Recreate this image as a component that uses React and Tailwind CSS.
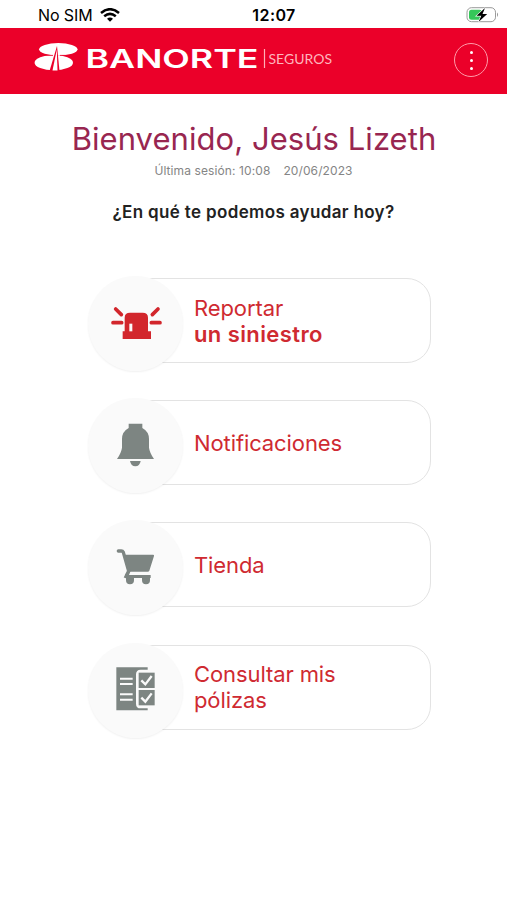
import React from 'react';

const SirenIcon = () => (
  <svg className="h-[95px] w-[95px]" viewBox="24 33 285 285" fill="#d2262c">
    <path d="M134 202V158q0-15 16-15h38q16 0 16 15v41h9v23H128v-23h6z" />
    <rect x="148" y="176" width="9" height="23" fill="#fafafa" />
    <path d="M107 132l17 17M234 132l-17 17M99 173h26M214 173h26" fill="none" stroke="#d2262c" strokeWidth="11" strokeLinecap="round" />
  </svg>
);

const BellIcon = () => (
  <svg className="h-[95px] w-[95px]" viewBox="24 25 285 285" fill="#7d8582">
    <path d="M146 102h41v13q20 11 20 33v26q2 15 15 34H111q13-19 15-34v-26q0-22 20-33z" />
    <path d="M150 214h32q-3 16-16 16t-16-16z" />
  </svg>
);

const CartIcon = () => (
  <svg className="h-[95px] w-[95px]" viewBox="24 31 285 285" fill="#7d8582">
    <path d="M131 135h88q4 0 3 4l-14 44q-1 3-5 3h-52l-4 10h65v9H137q-5-2-3-8l8-16z" />
    <path d="M115 124h9q4 0 6 4l16 56" fill="none" stroke="#7d8582" strokeWidth="10" strokeLinecap="round" />
    <path d="M133 203l8-12v14z" stroke="#7d8582" strokeWidth="3" />
    <path d="M138 203h24v9a12 12 0 0 1-24 0zM186 203h24v9a12 12 0 0 1-24 0z" />
  </svg>
);

const PolicyIcon = () => (
  <svg className="h-[95px] w-[95px]" viewBox="24 26 285 285" fill="#7d8582">
    <path d="M109 99h94v7h-21q-14 0-14 14v88q0 14 14 14h21v6h-94z" />
    <path d="M120 133h38M120 149h38M120 180h38M120 196h38" stroke="#fafafa" strokeWidth="6" />
    <rect x="176" y="115" width="48" height="46" />
    <rect x="176" y="167" width="48" height="46" />
    <path d="M184 138l12 12 19-25M184 190l12 12 19-25" fill="none" stroke="#fafafa" strokeWidth="7" />
  </svg>
);

const menuItems = [
  { icon: SirenIcon, title: 'Reportar', strong: 'un siniestro' },
  { icon: BellIcon, title: 'Notificaciones' },
  { icon: CartIcon, title: 'Tienda' },
  { icon: PolicyIcon, title: 'Consultar mis pólizas' },
];

function StatusBar() {
  return (
    <div className="grid h-7 grid-cols-3 items-center pt-0.5 pr-[7px] pl-[38px] text-black">
      <div className="flex items-center gap-[7px]">
        <span className="text-[16px] leading-none tracking-[-0.1px] whitespace-nowrap">No SIM</span>
        <svg className="h-[14px] w-5" viewBox="0 0 20 14" fill="none" stroke="#000" strokeWidth="2.5">
          <path d="M1 5Q10-2.6 19 5M4.2 8.3q5.8-4.8 11.6 0" />
          <path d="M7 10.7q3-2.3 6 0L10 13.8z" fill="#000" stroke="none" />
        </svg>
      </div>
      <span className="ml-[10px] text-center text-[16px] leading-none font-semibold tracking-[0.4px]">12:07</span>
      <svg className="h-[18px] w-[34px] justify-self-end" viewBox="0 0 34 18">
        <rect x="1" y="1.7" width="28.5" height="14" rx="4.5" fill="#fff" stroke="#9a9a9a" />
        <path d="M31 6.5q2.2 2.2 0 4.5z" fill="#9a9a9a" />
        <rect x="3" y="3.7" width="13" height="10" rx="2.5" fill="#35c759" />
        <path d="M19 2L10.5 9.8h4.8L12.5 16l8.7-8h-4.7z" fill="#000" stroke="#fff" strokeWidth="1.2" paintOrder="stroke" />
      </svg>
    </div>
  );
}

function Header() {
  return (
    <header className="flex h-[66px] items-start justify-between bg-[#eb0029] pr-[19px] pl-[34px]">
      <svg className="mt-[14px] h-[32px] w-[300px]" viewBox="0 0 300 32" fill="#fff">
        <ellipse cx="24.3" cy="7.3" rx="19.2" ry="6.2" />
        <ellipse cx="19.8" cy="20.7" rx="19.2" ry="7.6" />
        <path d="M1 13.4h18M26 13.4h16" stroke="#eb0029" strokeWidth="0.8" />
        <path d="M23 4L15.5 29H25.5z" fill="#eb0029" />
        <path d="M22.8 7.5L18.5 28.5h5z" />
        <text x="51.5" y="26" fontFamily="Inter, sans-serif" fontSize="25" fontWeight="600" textLength="173" lengthAdjust="spacingAndGlyphs">
          BANORTE
        </text>
        <path d="M230.5 7v19" stroke="#ffb0b8" strokeWidth="1.2" />
        <text x="234.5" y="21.5" fill="#ffb5bd" fontFamily="Lato, sans-serif" fontSize="14" textLength="63.5" lengthAdjust="spacingAndGlyphs">
          SEGUROS
        </text>
      </svg>
      <button className="mt-[15px] flex h-[34px] w-[34px] flex-col items-center justify-center gap-[5px] rounded-full border border-[#ff9aa8]">
        <span className="h-[3px] w-[3px] rounded-full bg-white" />
        <span className="h-[3px] w-[3px] rounded-full bg-white" />
        <span className="h-[3px] w-[3px] rounded-full bg-white" />
      </button>
    </header>
  );
}

function MenuItem({ icon: Icon, title, strong }) {
  return (
    <button className="flex h-[95px] w-[343px] text-left">
      <span className="z-10 h-[95px] w-[95px] shrink-0 rounded-full bg-[#fafafa] shadow-[0_1px_2px_rgba(0,0,0,0.06)]">
        <Icon />
      </span>
      <span className="mt-[2px] -ml-[47px] flex h-[85px] flex-1 items-center rounded-r-[24px] rounded-l-[16px] border border-[#e3e3e3] pr-[50px] pl-[57px] text-[22px] leading-[26px] tracking-[-0.1px] text-[#cf2a31]">
        <span>
          {title}
          {strong && <strong className="block font-semibold tracking-[0.4px]">{strong}</strong>}
        </span>
      </span>
    </button>
  );
}

export default function App() {
  return (
    <div className="h-[900px] w-[507px] overflow-hidden bg-white font-['Inter',sans-serif]">
      <StatusBar />
      <Header />
      <main className="flex flex-col items-center">
        <h1 className="mt-[25px] ml-[1px] text-[31px] leading-[40px] tracking-[0.05px] whitespace-nowrap text-[#982650]">
          Bienvenido, Jesús Lizeth
        </h1>
        <p className="mt-[4px] flex gap-[13px] text-[12px] leading-4 tracking-[0.1px] text-[#858585]">
          <span>Última sesión: 10:08</span>
          <span>20/06/2023</span>
        </p>
        <h2 className="mt-[21px] text-[17px] leading-6 font-semibold tracking-[0.35px] text-[#222]">¿En qué te podemos ayudar hoy?</h2>
        <div className="mt-[52px] ml-[12px] flex flex-col gap-[27.2px]">
          {menuItems.map((item) => (
            <MenuItem key={item.title} {...item} />
          ))}
        </div>
      </main>
    </div>
  );
}
